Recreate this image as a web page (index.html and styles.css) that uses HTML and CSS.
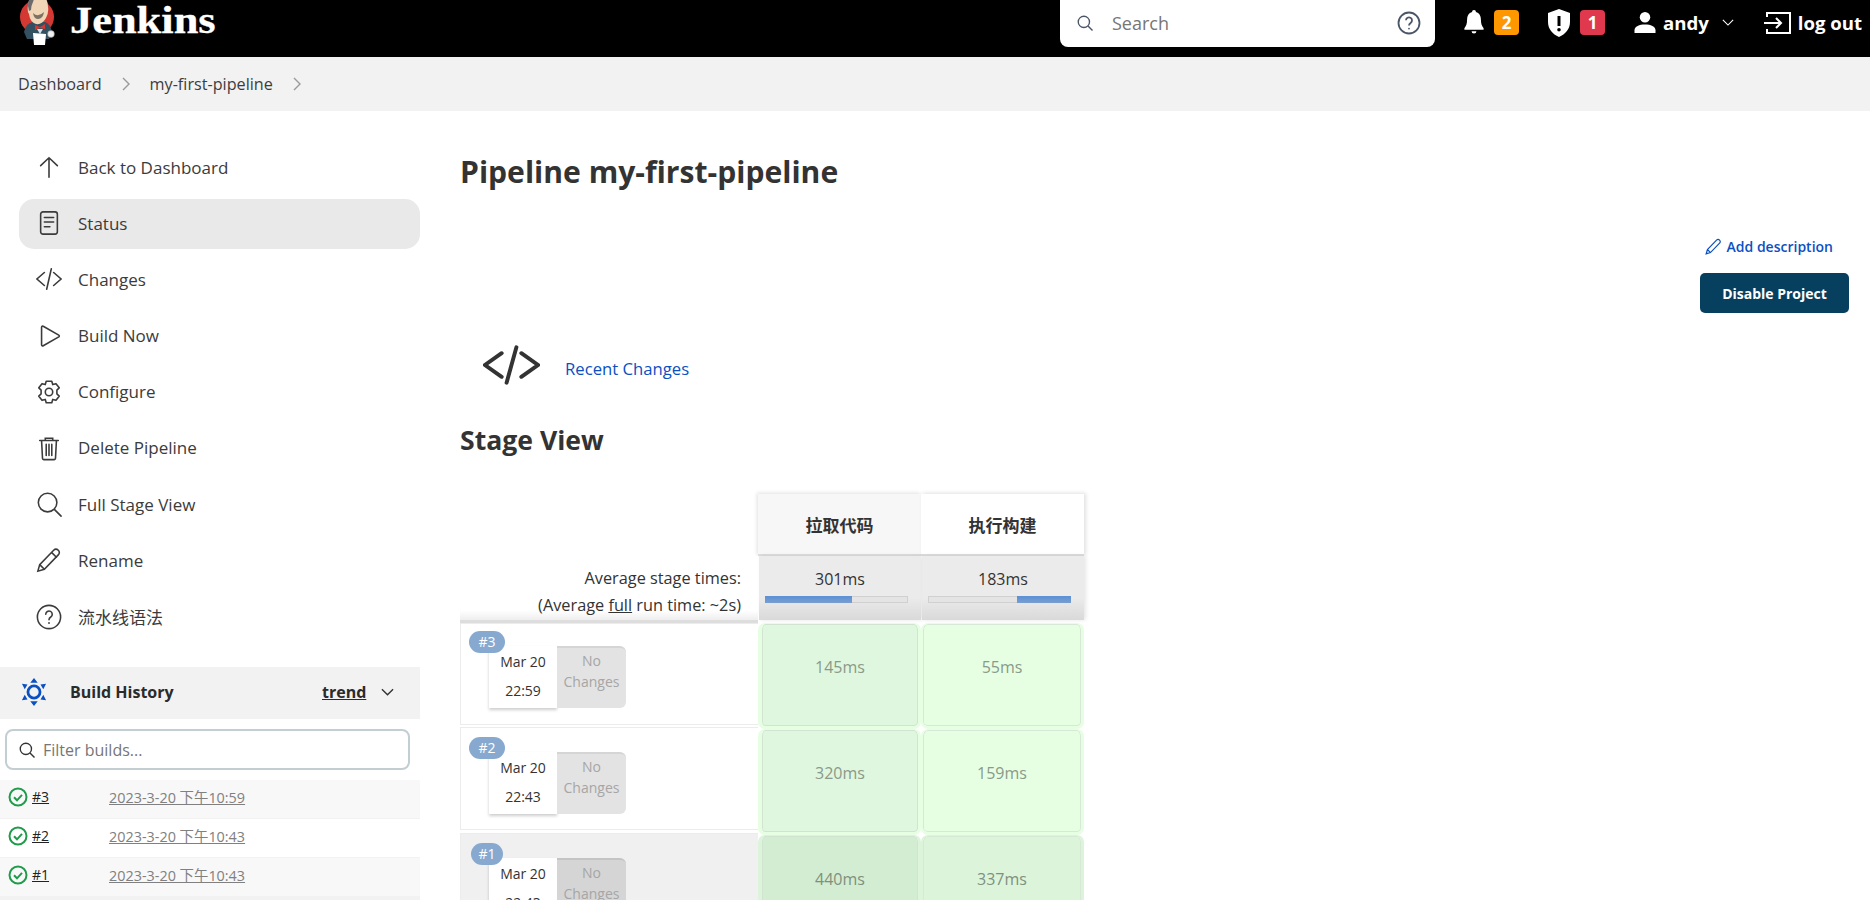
FILE: index.html
```html
<!DOCTYPE html>
<html lang="en">
<head>
<meta charset="utf-8">
<title>my-first-pipeline [Jenkins]</title>
<link rel="stylesheet" href="styles.css">
</head>
<body>
<header class="topbar">
  <a class="brand">
    <svg class="logo" viewBox="0 0 36 48" width="36" height="48">
      <circle cx="18" cy="18" r="17" fill="#d33833"/>
      <path d="M5 33 Q7 24 14 23 L26 23 Q32 25 33 34 L30 40 L8 40Z" fill="#335061"/>
      <path d="M9 6 Q10 -4 20 -4 Q29 -3 29 8 Q30 13 27 19 Q23 26 17 25 Q11 23 10 15 Q8 13 9 6Z" fill="#f0d6b7"/>
      <path d="M9 7 Q9 -3 17 -5 L14 3 Q12 7 12 11 L10 12Z" fill="#6d6b6d"/>
      <path d="M14 14 Q19 19 25 13 Q24 20 19 20 Q15 20 14 14Z" fill="#1f1f1f" opacity=".55"/>
      <path d="M16 26 L21 28 L26 25 L26 30 L21 29 L16 31Z" fill="#d33833"/>
      <path d="M18 30 L21 35 L24 30Z" fill="#d3e3ea"/>
      <path d="M14 34 L27 35 L26 46 L15 46Z" fill="#fff"/>
      <circle cx="32" cy="35" r="3.4" fill="#f0f0f0" stroke="#888" stroke-width=".5"/>
    </svg>
    <span class="wordmark">Jenkins</span>
  </a>
  <div class="search">
    <svg class="i18" viewBox="0 0 24 24"><circle cx="10.5" cy="10.5" r="7.5"/><path d="M16 16l6 6"/></svg>
    <span class="search-text">Search</span>
    <svg class="help" viewBox="0 0 24 24"><circle cx="12" cy="12" r="10.5"/><path d="M9 9.3a3 3 0 1 1 4.6 2.6c-1 .7-1.6 1.2-1.6 2.6"/><circle class="dot" cx="12" cy="17.6" r=".9"/></svg>
  </div>
  <div class="tools">
    <svg class="bell" viewBox="0 0 20 26"><path d="M10 0a2 2 0 0 1 2 2.2c3.6 1 5.2 4 5.2 8 0 4.400 1 6.600 2.800 8.800v1.500H0V19c1.800-2.200 2.800-4.400 2.800-8.800 0-4 1.600-7 5.200-8A2 2 0 0 1 10 0zM7.500 22h5a2.500 2.500 0 0 1-5 0z"/></svg>
    <span class="count orange">2</span>
    <svg class="shield" viewBox="0 0 22 28"><path fill-rule="evenodd" d="M11 0l11 4v9c0 7-4.500 12-11 15C4.500 25 0 20 0 13V4zM9.500 7v10h3V7zM11 19a1.800 1.800 0 1 0 0 3.600A1.800 1.800 0 0 0 11 19z"/></svg>
    <span class="count red">1</span>
    <svg class="person" viewBox="0 0 22 22"><circle cx="11" cy="5.500" r="5.500"/><path d="M0 22v-3c0-4 5-6 11-6s11 2 11 6v3z"/></svg>
    <span class="tool-text user">andy</span>
    <svg class="chev-white" viewBox="0 0 14 8"><path d="M1 1l6 6 6-6"/></svg>
    <svg class="logout" viewBox="0 0 28 24"><path d="M3 6V2h23v20H3v-4M0 12h17M12 7l5 5-5 5"/></svg>
    <span class="tool-text">log out</span>
  </div>
</header>

<nav class="crumbs">
  <span>Dashboard</span>
  <svg class="crumb-chev" viewBox="0 0 8 14"><path d="M1 1l6 6-6 6"/></svg>
  <span>my-first-pipeline</span>
  <svg class="crumb-chev" viewBox="0 0 8 14"><path d="M1 1l6 6-6 6"/></svg>
</nav>

<div class="page">
  <aside class="side">
    <ul class="tasks">
      <li class="task"><svg class="ico" viewBox="0 0 28 28"><path d="M14 25V4M5 12.500L14 4l9 8.500"/></svg>Back to Dashboard</li>
      <li class="task active"><svg class="ico" viewBox="0 0 28 28"><rect x="5" y="2" width="18" height="24" rx="2.500"/><path d="M9 8h10M9 13h10M9 18h6"/></svg>Status</li>
      <li class="task"><svg class="ico" viewBox="0 0 28 28"><path d="M9 7l-8 7 8 7M19 7l8 7-8 7M16.500 3l-5 22"/></svg>Changes</li>
      <li class="task"><svg class="ico" viewBox="0 0 28 28"><path d="M6 4.500c0-1 1-1.500 1.800-1L24.500 13c.8.500.8 1.500 0 2L7.800 24.500c-.8.500-1.800 0-1.800-1z"/></svg>Build Now</li>
      <li class="task"><svg class="ico" viewBox="0 0 28 28"><circle cx="14" cy="14" r="4"/><path d="M11 2.500h6l1 3.500 3.500-1 3.500 4.500-2.500 2.500v4l2.500 2.500-3.500 4.500-3.500-1-1 3.500h-6l-1-3.500-3.500 1L3 18.500 5.500 16v-4L3 9.500 6.500 5l3.500 1z" stroke-linejoin="round"/></svg>Configure</li>
      <li class="task"><svg class="ico" viewBox="0 0 28 28"><path d="M4 6h20M10 6V3.500h8V6M6 6l1 19a1.500 1.500 0 0 0 1.500 1.500h11A1.500 1.500 0 0 0 21 25l1-19M11 10v12M14 10v12M17 10v12"/></svg>Delete Pipeline</li>
      <li class="task"><svg class="ico" viewBox="0 0 28 28"><circle cx="12.500" cy="12.500" r="10"/><path d="M20 20l7 7"/></svg>Full Stage View</li>
      <li class="task"><svg class="ico" viewBox="0 0 28 28"><path d="M2 26l2-7L19 3.500c1.500-1.500 3.500-1.500 5 0s1.500 3.500 0 5L9 24zM4 19l5 5M17 6l5 5"/></svg>Rename</li>
      <li class="task"><svg class="ico" viewBox="0 0 28 28"><circle cx="14" cy="14" r="12.500"/><path d="M10.500 11a3.500 3.500 0 1 1 5.400 3c-1.200.8-1.900 1.400-1.900 3"/><circle class="dot" cx="14" cy="20.500" r="1"/></svg>流水线语法</li>
    </ul>

    <section class="history">
      <div class="history-head">
        <svg class="hist-icon" viewBox="0 0 28 32"><circle cx="14" cy="16" r="6.500"/><path class="solid" d="M14 1l4 5h-8zM14 31l-4-5h8zM1 7l6 1-3 5zM27 7l-6 1 3 5zM1 25l3-6 3 5zM27 25l-3-6-3 5z"/></svg>
        <span class="history-title">Build History</span>
        <span class="trend">trend</span>
        <svg class="chev-dark" viewBox="0 0 14 8"><path d="M1 1l6 6 6-6"/></svg>
      </div>
      <div class="filter">
        <svg class="i18 dark" viewBox="0 0 24 24"><circle cx="10.500" cy="10.500" r="7.500"/><path d="M16 16l6 6"/></svg>
        <span>Filter builds...</span>
      </div>
      <div class="build odd"><svg class="ok" viewBox="0 0 20 20"><circle cx="10" cy="10" r="8.500"/><path d="M6 10.300l3 3 5-5.500"/></svg><a class="num">#3</a><a class="when">2023-3-20 下午10:59</a></div>
      <div class="build"><svg class="ok" viewBox="0 0 20 20"><circle cx="10" cy="10" r="8.500"/><path d="M6 10.300l3 3 5-5.500"/></svg><a class="num">#2</a><a class="when">2023-3-20 下午10:43</a></div>
      <div class="build odd"><svg class="ok" viewBox="0 0 20 20"><circle cx="10" cy="10" r="8.500"/><path d="M6 10.300l3 3 5-5.500"/></svg><a class="num">#1</a><a class="when">2023-3-20 下午10:43</a></div>
    </section>
  </aside>

  <main class="main">
    <h1 class="title">Pipeline my-first-pipeline</h1>
    <div class="actions">
      <a class="add"><svg class="pen" viewBox="0 0 28 28"><path d="M2 26l2-7L19 3.500c1.500-1.500 3.500-1.500 5 0s1.500 3.500 0 5L9 24zM4 19l5 5"/></svg>Add description</a>
      <button class="disable">Disable Project</button>
    </div>
    <div class="recent">
      <svg class="code" viewBox="0 0 58 40"><path d="M19 8L2 20l17 12M39 8l17 12-17 12M34 2L24 38"/></svg>
      <a class="recent-link">Recent Changes</a>
    </div>
    <h2 class="stage-title">Stage View</h2>

    <div class="stage">
      <div class="blank"></div>
      <div class="head alt">拉取代码</div>
      <div class="head">执行构建</div>

      <div class="avg-label">Average stage times:<br>(Average <u>full</u> run time: ~2s)</div>
      <div class="avg"><span>301ms</span><div class="bar"><div class="fill" style="width:62%"></div></div></div>
      <div class="avg"><span>183ms</span><div class="bar end"><div class="fill" style="width:38%"></div></div></div>

      <div class="run first">
        <span class="badge">#3</span>
        <div class="card"><div class="date"><span>Mar 20</span><span>22:59</span></div><div class="none">No<br>Changes</div></div>
      </div>
      <div class="cell a"><span>145ms</span></div>
      <div class="cell b"><span>55ms</span></div>

      <div class="run">
        <span class="badge">#2</span>
        <div class="card"><div class="date"><span>Mar 20</span><span>22:43</span></div><div class="none">No<br>Changes</div></div>
      </div>
      <div class="cell a"><span>320ms</span></div>
      <div class="cell b"><span>159ms</span></div>

      <div class="run shade">
        <span class="badge">#1</span>
        <div class="card"><div class="date"><span>Mar 20</span><span>22:43</span></div><div class="none">No<br>Changes</div></div>
      </div>
      <div class="cell a dim"><span>440ms</span></div>
      <div class="cell b dim"><span>337ms</span></div>
    </div>
  </main>
</div>
</body>
</html>
```
FILE: styles.css
```css
* { box-sizing: border-box; }
html, body { margin: 0; height: 900px; overflow: hidden; }
body {
  font-family: "Open Sans", "Noto Sans CJK SC", sans-serif;
  font-size: 16px;
  color: #333;
  background: #fff;
}
ul { list-style: none; margin: 0; padding: 0; }
svg { fill: none; stroke: currentColor; flex: none; }

.topbar {
  height: 57px;
  background: #000;
  color: #fff;
  display: flex;
  align-items: flex-start;
  overflow: hidden;
}
.brand { display: flex; align-items: flex-start; padding-left: 19px; width: 1060px; }
.logo { stroke: none; margin-top: -1px; }
.wordmark {
  font-family: "Liberation Serif", serif;
  font-weight: 700;
  font-size: 37px;
  line-height: 40px;
  margin: 1px 0 0 15px;
  transform: scaleX(1.2);
  transform-origin: left center;
  -webkit-text-stroke: .3px #fff;
}
.search {
  width: 375px;
  height: 47px;
  background: #fff;
  border-radius: 0 0 8px 8px;
  display: flex;
  align-items: center;
  padding: 0 14px 2px 16px;
  color: #4a5568;
}
.i18 { width: 18px; height: 18px; stroke-width: 1.800; }
.search-text { margin-left: 18px; font-size: 18px; color: #767676; flex: 1; }
.help { width: 24px; height: 24px; stroke-width: 1.800; }
.dot { fill: currentColor; stroke: none; }
.tools { display: flex; align-items: center; height: 45px; padding-left: 29px; font-weight: 700; }
.tools svg { color: #fff; }
.bell { width: 20px; height: 25px; fill: #fff !important; stroke: none; }
.count {
  width: 25px;
  height: 25px;
  border-radius: 4px;
  margin-left: 10px;
  font-size: 17px;
  line-height: 25px;
  text-align: center;
}
.orange { background: #fe9700; }
.red { background: #e0384c; }
.shield { width: 22px; height: 28px; fill: #fff !important; stroke: none; margin-left: 29px; }
.person { width: 22px; height: 21px; fill: #fff !important; stroke: none; margin-left: 29px; }
.tool-text { font-size: 18.600px; white-space: nowrap; }
.user { margin-left: 7px; }
.chev-white { width: 12px; height: 7px; stroke-width: 1.300; margin-left: 13px; }
.logout { width: 28px; height: 24px; stroke-width: 2; margin: 0 6px 0 30px; }

.crumbs {
  height: 54px;
  background: #f2f2f2;
  display: flex;
  align-items: center;
  padding-left: 18px;
  font-size: 16.200px;
  color: #3d3d3d;
}
.crumb-chev { width: 8px; height: 14px; color: #999; stroke-width: 1.400; margin: 0 20px; }

.page { display: flex; align-items: flex-start; }
.side { width: 420px; flex: none; background: #fff; }
.tasks { padding: 32px 0 24.400px 19px; display: flex; flex-direction: column; gap: 6.200px; }
.task {
  height: 50px;
  display: flex;
  align-items: center;
  border-radius: 15px;
  padding: 0 0 2px 17px;
  font-size: 17px;
  color: #3b3b3b;
}
.task.active { background: #e9e9e9; }
.ico { width: 26px; height: 26px; stroke-width: 1.700; margin-right: 16px; stroke-linecap: round; }

.history {
  height: 233px;
  background: linear-gradient(#f2f2f2 52px, #fff 52px, #fff 228px, #f2f2f2 230px);
}
.history-head {
  height: 52px;
  display: flex;
  align-items: center;
  padding: 0 0 2px 21px;
  color: #2b2b2b;
  font-weight: 700;
  font-size: 16px;
}
.hist-icon { width: 26px; height: 30px; color: #0b50c2; stroke-width: 3; margin-right: 23px; }
.solid { fill: #0b50c2; stroke: none; }
.history-title { width: 252px; }
.trend { text-decoration: underline; font-size: 16px; }
.chev-dark { width: 13px; height: 8px; stroke-width: 1.500; margin-left: 15px; color: #333; }
.filter {
  height: 41px;
  margin: 10px 10px 10px 5px;
  background: #fff;
  border: 2px solid #c3ced3;
  border-radius: 8px;
  display: flex;
  align-items: center;
  padding: 2px 0 0 11px;
  font-size: 16px;
  color: #767676;
}
.i18.dark { color: #333; margin-right: 7px; }
.build {
  height: 39px;
  display: flex;
  align-items: center;
  background: #fff;
  padding: 0 0 4px 8px;
  border-bottom: 1px solid #f2f2f2;
}
.build.odd { background: #f8f8f8; }
.ok { width: 20px; height: 20px; color: #1f9b4b; stroke-width: 2; margin-right: 4px; }
.num { width: 77px; color: #222; text-decoration: underline; font-size: 14px; }
.when { color: #808080; text-decoration: underline; font-size: 14.400px; }

.main { flex: 1; padding: 41px 21px 0 40px; display: flex; flex-direction: column; }
.title { margin: 0; font-size: 30.100px; line-height: 40px; font-weight: 700; color: #333; }
.actions { display: flex; flex-direction: column; align-items: flex-end; margin-top: 42px; }
.add {
  display: flex;
  align-items: center;
  height: 24px;
  color: #0b50c2;
  font-size: 14px;
  font-weight: 600;
  margin-right: 16px;
}
.pen { width: 17px; height: 17px; stroke-width: 2; margin-right: 5px; }
.disable {
  width: 149px;
  height: 40px;
  margin-top: 15px;
  border: 0;
  border-radius: 5px;
  background: #07405f;
  color: #fff;
  font: 700 14px "Open Sans", sans-serif;
}
.recent { display: flex; align-items: center; margin-top: 32px; height: 40px; padding-left: 23px; }
.code { width: 57px; height: 40px; stroke-width: 4; stroke-linecap: round; color: #333; }
.recent-link { margin: 6px 0 0 25px; color: #0b50c2; font-size: 16.700px; }
.stage-title { margin: 37px 0 0; font-size: 26.600px; line-height: 36px; font-weight: 700; color: #333; }

.stage {
  margin-top: 36px;
  display: grid;
  grid-template-columns: 298px 163px 163px;
  grid-template-rows: 62px 67px repeat(3, 106px);
  width: 624px;
}
.blank { background: #fff; }
.head {
  display: flex;
  align-items: center;
  justify-content: center;
  background: #fff;
  font-weight: 700;
  font-size: 17px;
  color: #333;
  box-shadow: 2px -1px 4px rgba(0, 0, 0, .12);
  border-bottom: 2px solid #ddd;
}
.head.alt { background: #f7f7f7; box-shadow: -1px -1px 4px rgba(0, 0, 0, .12); }
.avg-label {
  text-align: right;
  padding: 9px 17px 0 0;
  line-height: 27px;
  font-size: 16.300px;
  background: linear-gradient(#fff 85%, #eee);
  border-bottom: 3px solid #ddd;
}
.avg {
  margin: 0 0 3px 1px;
  background: linear-gradient(#ebebeb 65%, #d9d9d9);
  text-align: center;
  padding-top: 7px;
  line-height: 32px;
  font-size: 16px;
  box-shadow: 2px 0 4px rgba(0, 0, 0, .1);
}
.avg span { display: block; }
.bar {
  width: 143px;
  height: 7px;
  margin: 1px 0 0 6px;
  background: #e4e4e4;
  border: 1px solid #d0d0d0;
}
.fill {
  height: 7px;
  margin: -1px;
  background: linear-gradient(#5b8fd6, #7a9ecf);
}
.bar.end .fill { margin-left: auto; margin-right: -1px; }
.run {
  background: #fff;
  border: 1px solid #ececec;
  border-right: 0;
  position: relative;
  margin: -2px 0 5px;
  padding: 24px 0 0 28px;
}
.run.first { margin: 0 0 4px; padding-top: 22px; }
.run.first .badge { top: 7px; }
.run.shade { background: #f0f0f0; }
.badge {
  position: absolute;
  left: 8px;
  top: 9px;
  width: 36px;
  height: 22px;
  border-radius: 11px;
  background: #87a9d0;
  color: #fff;
  font-size: 14px;
  line-height: 22px;
  text-align: center;
}
.shade .badge { left: 10px; width: 32px; }
.card { display: flex; width: 138px; height: 62px; }
.date {
  width: 68px;
  background: #fff;
  box-shadow: 0 2px 3px rgba(0, 0, 0, .2);
  display: flex;
  flex-direction: column;
  align-items: center;
  justify-content: center;
  gap: 8px;
  padding-bottom: 2px;
  font-size: 14px;
  line-height: 21px;
  color: #333;
}
.none {
  width: 69px;
  background: #e3e3e3;
  border-top: 2px solid #d5d5d5;
  border-radius: 0 6px 6px 0;
  color: #a6a6a6;
  font-size: 14px;
  line-height: 21px;
  text-align: center;
  padding-top: 2px;
}
.shade .none { background: #d5d5d5; border-color: #c4c4c4; }
.cell {
  display: flex;
  justify-content: center;
  padding-top: 32px;
  font-size: 16px;
  line-height: 22px;
  color: #8a9a8a;
  background-clip: padding-box;
  border-style: solid;
  border-color: #e6ffe3;
  border-radius: 7px;
}
.cell.a { background-color: #dff7de; border-width: 1px 3px 3px 4px; box-shadow: inset 0 0 0 1px #d3e3d2; }
.cell.b { background-color: #e6ffe3; border-width: 1px 3px 3px 2px; box-shadow: inset 0 0 0 1px #d8e8d6; }
.cell.dim { border-color: #dcf5da; color: #7f907f; }
.cell.a.dim { background-color: #d3edd2; }
.cell.b.dim { background-color: #dcf5da; }
```
